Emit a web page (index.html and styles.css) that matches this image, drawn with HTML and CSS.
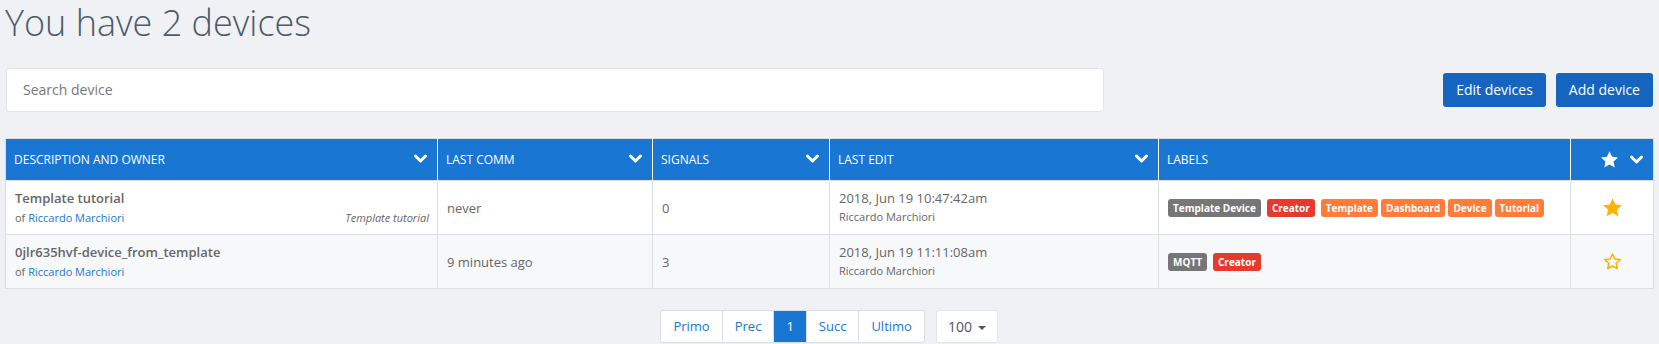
FILE: index.html
```html
<!doctype html>
<html>
<head>
    <title>Devices</title>
    <link rel="stylesheet" href="styles.css">
</head>
<body>

<div class="page">
    <h1 class="title">You have 2 devices</h1>

    <div class="toolbar">
        <div class="search">Search device</div>
        <div class="actions">
            <a class="btn">Edit devices</a>
            <a class="btn">Add device</a>
        </div>
    </div>

    <table class="devices">
        <colgroup>
            <col style="width:432px">
            <col style="width:215px">
            <col style="width:177px">
            <col style="width:329px">
            <col style="width:412px">
            <col style="width:83px">
        </colgroup>
        <thead>
        <tr>
            <th>Description and owner <span class="chev"></span></th>
            <th>Last comm <span class="chev"></span></th>
            <th>Signals <span class="chev"></span></th>
            <th>Last edit <span class="chev"></span></th>
            <th>Labels</th>
            <th class="fav-head">
                <svg class="star" viewBox="0 0 24 24"><path d="M12 1.6l3.2 6.9 7.5.9-5.6 5.1 1.5 7.5L12 18.2 5.4 22l1.5-7.5L1.3 9.4l7.5-.9z" fill="#fff"/></svg>
                <span class="chev"></span>
            </th>
        </tr>
        </thead>
        <tbody>
        <tr>
            <td>
                <div class="name">Template tutorial</div>
                <div class="owner-line">
                    <span class="owner">of <a>Riccardo Marchiori</a></span>
                    <span class="template">Template tutorial</span>
                </div>
            </td>
            <td>never</td>
            <td>0</td>
            <td>
                <div>2018, Jun 19 10:47:42am</div>
                <div class="small">Riccardo Marchiori</div>
            </td>
            <td>
                <div class="labels">
                    <span class="label gray">Template Device</span>
                    <span class="label red">Creator</span>
                    <span class="label orange">Template</span>
                    <span class="label orange">Dashboard</span>
                    <span class="label orange">Device</span>
                    <span class="label orange">Tutorial</span>
                </div>
            </td>
            <td class="fav">
                <svg class="star" viewBox="0 0 24 24"><path d="M12 1.6l3.2 6.9 7.5.9-5.6 5.1 1.5 7.5L12 18.2 5.4 22l1.5-7.5L1.3 9.4l7.5-.9z" fill="#ffb300"/></svg>
            </td>
        </tr>
        <tr>
            <td>
                <div class="name">0jlr635hvf-device_from_template</div>
                <div class="owner-line">
                    <span class="owner">of <a>Riccardo Marchiori</a></span>
                </div>
            </td>
            <td>9 minutes ago</td>
            <td>3</td>
            <td>
                <div>2018, Jun 19 11:11:08am</div>
                <div class="small">Riccardo Marchiori</div>
            </td>
            <td>
                <div class="labels">
                    <span class="label gray">MQTT</span>
                    <span class="label red">Creator</span>
                </div>
            </td>
            <td class="fav">
                <svg class="star" viewBox="0 0 24 24"><path d="M12 3.4l2.6 5.7 6.2.7-4.6 4.2 1.2 6.2L12 17.1l-5.4 3.1 1.2-6.2-4.6-4.2 6.2-.7z" fill="none" stroke="#ffb300" stroke-width="1.8" stroke-linejoin="round"/></svg>
            </td>
        </tr>
        </tbody>
    </table>

    <div class="paging">
        <ul class="pagination">
            <li><a>Primo</a></li>
            <li><a>Prec</a></li>
            <li class="active"><a>1</a></li>
            <li><a>Succ</a></li>
            <li><a>Ultimo</a></li>
        </ul>
        <div class="per-page">100 <span class="caret"></span></div>
    </div>
</div>

</body>
</html>
```

FILE: styles.css
```css
body {
    background: #f0f1f5;
    color: #666;
    margin: 0;
    font-family: "Open Sans", "Noto Sans", sans-serif;
    font-size: 13px;
}

a {
    color: #1976d2;
    text-decoration: none;
    cursor: pointer;
}

.page {
    padding: 0 6px 0 5px;
}

.title {
    font-weight: 300;
    font-size: 36px;
    line-height: 46px;
    color: #4d5b69;
    margin: 0 0 0 0;
}

.toolbar {
    display: flex;
    align-items: center;
    margin-top: 22px;
}

.search {
    width: 1080px;
    height: 42px;
    line-height: 42px;
    padding: 0 0 0 16px;
    background: #fff;
    border: 1px solid #e1e3e8;
    border-radius: 3px;
    font-size: 14px;
    color: #777;
    margin-left: 1px;
}

.actions {
    margin-left: auto;
    display: flex;
    gap: 10px;
}

.btn {
    display: inline-block;
    background: #1565c0;
    color: #fff;
    font-size: 14px;
    line-height: 34px;
    height: 34px;
    padding: 0 13px;
    border-radius: 3px;
}

.devices {
    margin-top: 26px;
    border-collapse: collapse;
    table-layout: fixed;
    width: 1648px;
    background: #fff;
    border: 1px solid #dcdee2;
}

.devices th {
    background: #1976d2;
    color: #fff;
    font-weight: 400;
    font-size: 12px;
    text-transform: uppercase;
    text-align: left;
    height: 41px;
    padding: 0 10px 0 8px;
    border-left: 1px solid #fff;
}

.devices th:first-child {
    border-left: none;
}

.chev {
    float: right;
    width: 13px;
    height: 9px;
    margin-top: 3px;
    background: no-repeat center/13px 9px url("data:image/svg+xml,%3Csvg xmlns='http://www.w3.org/2000/svg' viewBox='0 0 13 9'%3E%3Cpath d='M1.5 2l5 5 5-5' fill='none' stroke='%23fff' stroke-width='3' stroke-linecap='round' stroke-linejoin='round'/%3E%3C/svg%3E");
}

.devices th.fav-head {
    text-align: right;
    padding-right: 10px;
}

.fav-head .star {
    width: 19px;
    height: 19px;
    vertical-align: middle;
    margin-right: 8px;
}

.fav-head .chev {
    float: none;
    display: inline-block;
    vertical-align: middle;
    margin-top: 0;
}

.devices td {
    height: 53px;
    padding: 0 8px 0 9px;
    border: 1px solid #dcdee2;
    vertical-align: middle;
    font-size: 13px;
    color: #666;
}

.devices tbody tr:nth-child(2) td {
    background: #f7f8fa;
}

.name {
    font-weight: 600;
    color: #666;
    line-height: 19px;
    margin-top: 1px;
}

.owner-line {
    display: flex;
    justify-content: space-between;
    font-size: 11px;
    line-height: 20px;
}

.template {
    font-style: italic;
    color: #666;
}

.small {
    font-size: 11px;
    line-height: 19px;
}

.labels {
    display: flex;
    gap: 3px;
}

.label {
    display: inline-block;
    color: #fff;
    font-weight: 700;
    font-size: 10px;
    line-height: 18px;
    padding: 0 5px;
    border-radius: 3px;
}

.label.gray {
    background: #767676;
    margin-right: 3px;
}

.label.red {
    background: #e53a2c;
    margin-right: 3px;
}

.label.orange {
    background: #ff7c3b;
}

.fav {
    text-align: center;
}

.fav .star {
    width: 21px;
    height: 21px;
    vertical-align: middle;
}

.paging {
    display: flex;
    justify-content: center;
    align-items: flex-start;
    margin-top: 21px;
    gap: 11px;
}

.pagination {
    display: flex;
    list-style: none;
    margin: 0;
    padding: 0;
    background: #fff;
    border: 1px solid #dcdee2;
    border-radius: 3px;
}

.pagination li a {
    display: block;
    padding: 6px 12px;
    line-height: 19px;
    border-left: 1px solid #dcdee2;
}

.pagination li:first-child a {
    border-left: none;
}

.pagination li.active a {
    background: #1976d2;
    color: #fff;
}

.per-page {
    background: #fff;
    border: 1px solid #e3e5e9;
    border-radius: 3px;
    padding: 6px 11px;
    line-height: 19px;
    font-size: 14px;
    color: #555;
}

.caret {
    display: inline-block;
    vertical-align: middle;
    border-top: 4px solid #555;
    border-left: 4px solid transparent;
    border-right: 4px solid transparent;
    margin-left: 2px;
}
```
